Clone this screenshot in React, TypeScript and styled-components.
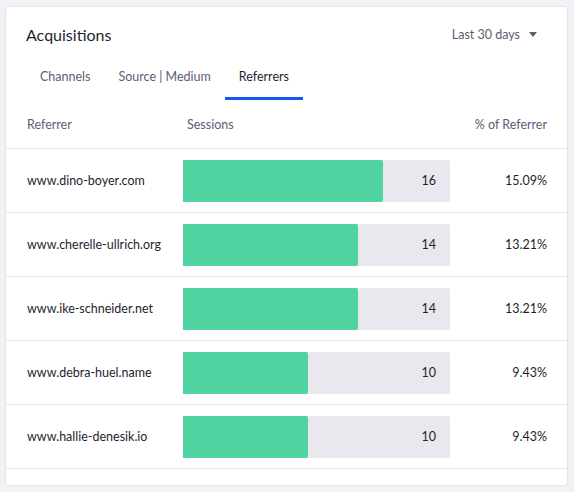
import React from 'react'
import styled, {createGlobalStyle} from 'styled-components'

const GlobalStyle = createGlobalStyle`
  html, body {
    margin: 0;
    background: #f1f2f6;
    font-family: Lato, "Noto Sans", sans-serif;
    color: #1e1f2e;
  }
`

const Page = styled.div`
  padding: 6px 6px 6px 5px;
`

const Card = styled.div`
  background: #fff;
  border: 1px solid #e4e5ea;
  border-radius: 4px;
  padding-bottom: 16px;
`

const Header = styled.div`
  display: flex;
  justify-content: space-between;
  align-items: center;
  padding: 18px 30px 0 20px;
`

const Title = styled.h2`
  margin: 0;
  font-size: 16px;
  font-weight: 400;
  color: #1e1f2e;
`

const RangePicker = styled.button`
  display: flex;
  align-items: center;
  gap: 9px;
  border: 0;
  background: none;
  padding: 0;
  font: inherit;
  font-size: 12.5px;
  color: #5b5e72;
`

const Caret = styled.span`
  width: 0;
  height: 0;
  border-left: 4px solid transparent;
  border-right: 4px solid transparent;
  border-top: 5px solid #5b5e72;
`

const Tabs = styled.div`
  display: flex;
  padding: 0 0 0 20px;
  margin-top: 17px;
`

const Tab = styled.div<{$active?: boolean}>`
  padding: 8px 14px 13px;
  font-size: 12.5px;
  color: ${p => (p.$active ? '#1e1f2e' : '#5b5e72')};
  border-bottom: 3px solid ${p => (p.$active ? '#1659f0' : 'transparent')};
`

const Table = styled.div``

const Row = styled.div<{$head?: boolean}>`
  display: grid;
  grid-template-columns: 156px 267px 1fr;
  align-items: center;
  height: ${p => (p.$head ? '48px' : '63px')};
  padding: 0 20px 0 21px;
  border-bottom: 1px solid #e7e8ed;
  font-size: 12.5px;
  color: ${p => (p.$head ? '#5b5e72' : '#1e1f2e')};
`

const HeadCell = styled.div<{$right?: boolean; $indent?: boolean}>`
  text-align: ${p => (p.$right ? 'right' : 'left')};
  padding-left: ${p => (p.$indent ? '4px' : '0')};
`

const Site = styled.div``

const Track = styled.div`
  position: relative;
  height: 42px;
  background: #e8e8ee;
  border-radius: 2px;
  display: flex;
  align-items: center;
  justify-content: flex-end;
`

const Fill = styled.div`
  position: absolute;
  left: 0;
  top: 0;
  bottom: 0;
  background: #50d3a1;
  border-radius: 0 2px 2px 0;
`

const Count = styled.span`
  position: relative;
  padding-right: 14px;
`

const Percent = styled.div`
  text-align: right;
`

const rows = [
  {site: 'www.dino-boyer.com', sessions: 16, pct: '15.09%'},
  {site: 'www.cherelle-ullrich.org', sessions: 14, pct: '13.21%'},
  {site: 'www.ike-schneider.net', sessions: 14, pct: '13.21%'},
  {site: 'www.debra-huel.name', sessions: 10, pct: '9.43%'},
  {site: 'www.hallie-denesik.io', sessions: 10, pct: '9.43%'},
]

const SCALE = 21.36

function App() {
  return (
    <Page>
      <GlobalStyle />
      <Card>
        <Header>
          <Title>Acquisitions</Title>
          <RangePicker>
            Last 30 days <Caret />
          </RangePicker>
        </Header>
        <Tabs>
          <Tab>Channels</Tab>
          <Tab>Source | Medium</Tab>
          <Tab $active>Referrers</Tab>
        </Tabs>
        <Table>
          <Row $head>
            <HeadCell>Referrer</HeadCell>
            <HeadCell $indent>Sessions</HeadCell>
            <HeadCell $right>% of Referrer</HeadCell>
          </Row>
          {rows.map(r => (
            <Row key={r.site}>
              <Site>{r.site}</Site>
              <Track>
                <Fill style={{width: `${(r.sessions / SCALE) * 100}%`}} />
                <Count>{r.sessions}</Count>
              </Track>
              <Percent>{r.pct}</Percent>
            </Row>
          ))}
        </Table>
      </Card>
    </Page>
  )
}

export default App
